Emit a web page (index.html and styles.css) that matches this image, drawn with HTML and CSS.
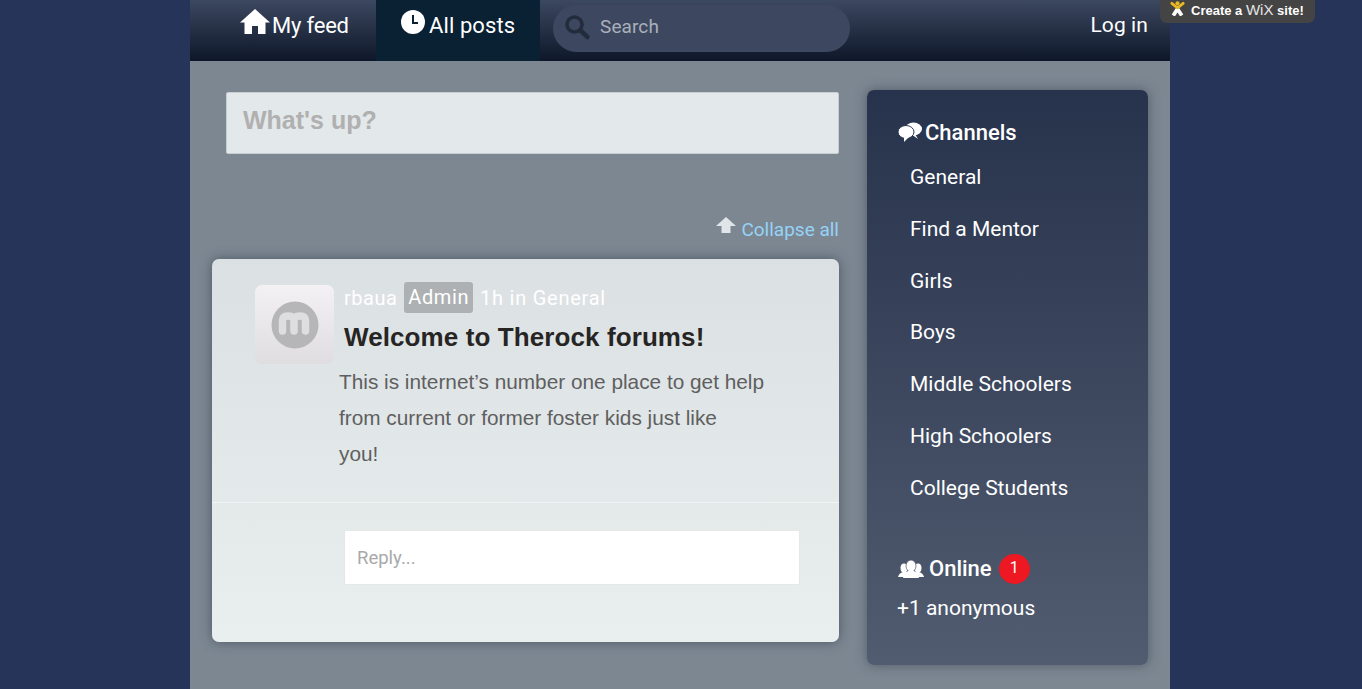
FILE: index.html
```html
<html>
  <head>
    <title>Therock forums</title>
    <link rel="stylesheet" href="styles.css">
  </head>
  <body>
    <div class="wix-badge">
      <svg class="wix-logo" viewBox="0 0 16 16" width="15" height="15"><path fill="none" stroke="#fff" stroke-width="4" d="M3.5 15.5 L8 8.5 L12.5 15.5"/><path fill="none" stroke="#e8b923" stroke-width="3" stroke-linecap="round" stroke-linejoin="round" d="M2 2.5 L8 7.5 L14 2.5"/><circle cx="8" cy="2.5" r="2.2" fill="#e8b923"/></svg>
      <span>Create a <span class="wix-name">WiX</span> site!</span>
    </div>
    <div class="page">
      <nav class="topbar">
        <a class="tab tab-feed">
          <svg class="tab-icon" viewBox="0 0 30 26" width="30" height="26"><path fill="#fff" d="M15 0 L30 13.5 L25.5 13.5 L25.5 25 L18 25 L18 17 L12 17 L12 25 L4.5 25 L4.5 13.5 L0 13.5 Z"/></svg>
          <span class="feed-label">My feed</span>
        </a>
        <a class="tab tab-active">
          <svg class="tab-icon" viewBox="0 0 24 24" width="24" height="24"><circle cx="12" cy="12" r="12" fill="#fff"/><path fill="none" stroke="#0a2033" stroke-width="2" d="M12 5 V13 H17"/></svg>
          All posts
        </a>
        <div class="search">
          <svg class="search-icon" viewBox="0 0 26 26" width="26" height="26"><circle cx="9.5" cy="9.5" r="7.5" fill="none" stroke="#232b3c" stroke-width="3.5"/><path stroke="#232b3c" stroke-width="4.5" stroke-linecap="round" d="M15.5 15.5 L22.5 22"/></svg>
          <span>Search</span>
        </div>
        <a class="login">Log in</a>
      </nav>
      <div class="content">
        <main class="feed">
          <div class="whats-up">What's up?</div>
          <div class="collapse">
            <svg viewBox="0 0 20 18" width="20" height="18"><path fill="#dfe5e8" d="M10 0 L20 9 L14.5 9 L14.5 16 L5.5 16 L5.5 9 L0 9 Z"/></svg>
            <a>Collapse all</a>
          </div>
          <article class="post">
            <div class="post-body">
              <div class="avatar">
                <svg viewBox="0 0 48 48" width="48" height="48"><circle cx="24" cy="24" r="23.5" fill="#b6b6b8"/><path fill="none" stroke="#dedde0" stroke-width="7.5" stroke-linecap="round" stroke-linejoin="round" d="M11.5 30 V20 Q11.5 15 17 15 Q23 15 23 20 V30 M23 20 Q23 15 29 15 Q34.5 15 34.5 20 V30"/></svg>
              </div>
              <div class="post-text">
                <div class="post-meta"><span class="author">rbaua</span><span class="role">Admin</span><span>1h in General</span></div>
                <h1>Welcome to Therock forums!</h1>
                <p>This is internet’s number one place to get help<br>from current or former foster kids just like<br>you!</p>
              </div>
            </div>
            <div class="post-reply">
              <div class="reply-box">Reply...</div>
            </div>
          </article>
        </main>
        <aside class="sidebar">
          <h2 class="side-head">
            <svg viewBox="0 0 24 20" width="24" height="20"><ellipse cx="15.5" cy="7" rx="8.5" ry="6.5" fill="#fff"/><path fill="#fff" d="M17 12 L20 17 L13 12 Z"/><ellipse cx="8" cy="10" rx="8" ry="6.5" fill="#fff" stroke="#2b3750" stroke-width="1"/><path fill="#fff" d="M6 15 L6 20 L11 15 Z"/></svg>
            Channels
          </h2>
          <ul class="channels">
            <li>General</li>
            <li>Find a Mentor</li>
            <li>Girls</li>
            <li>Boys</li>
            <li>Middle Schoolers</li>
            <li>High Schoolers</li>
            <li>College Students</li>
          </ul>
          <h2 class="side-head online">
            <svg viewBox="0 0 26 18" width="26" height="18"><g fill="#fff"><ellipse cx="6" cy="8" rx="3.5" ry="4.5"/><ellipse cx="20" cy="8" rx="3.5" ry="4.5"/><path d="M0 17 Q1 13 5 12 H21 Q25 13 26 17 Z"/></g><ellipse cx="13" cy="6" rx="5" ry="6" fill="#fff" stroke="#4a566c" stroke-width="0.7"/><path fill="#fff" d="M5 18 Q6 13 10 11 H16 Q20 13 21 18 Z"/></svg>
            Online <span class="badge">1</span>
          </h2>
          <div class="anon">+1 anonymous</div>
        </aside>
      </div>
    </div>
  </body>
</html>
```

FILE: styles.css
```css
html, body {
  margin: 0;
  height: 100%;
  overflow: hidden;
}
body {
  background-color: #26345a;
  color: #fff;
  font-family: Roboto, "Liberation Sans", sans-serif;
}

.wix-badge {
  position: absolute;
  top: 0;
  left: 1160px;
  width: 155px;
  height: 23px;
  box-sizing: border-box;
  padding-left: 10px;
  display: flex;
  align-items: flex-start;
  gap: 6px;
  background-color: #444;
  border-radius: 0 0 7px 7px;
  font-family: "Liberation Sans", sans-serif;
  font-size: 13px;
  font-weight: bold;
  line-height: 20px;
}
.wix-logo {
  margin-top: 1px;
}
.wix-name {
  font-weight: normal;
  font-size: 15px;
  color: #e4e4e4;
}

.page {
  width: 980px;
  height: 100%;
  margin-left: 190px;
  background-color: #7c8792;
}

.topbar {
  display: flex;
  height: 61px;
  background: linear-gradient(#3c4860, #0e1729);
  font-size: 22px;
  letter-spacing: 0.1px;
}
.tab {
  display: flex;
  align-items: center;
  gap: 2px;
  height: 50px;
}
.tab-icon {
  margin-top: -6px;
}
.feed-label {
  letter-spacing: -0.2px;
}
.tab-feed {
  width: 186px;
  padding-left: 50px;
  box-sizing: border-box;
}
.tab-active {
  width: 164px;
  height: 61px;
  box-sizing: border-box;
  padding: 0 0 11px 25px;
  background-color: #0a2033;
  gap: 4px;
}
.search {
  display: flex;
  align-items: center;
  gap: 9px;
  width: 297px;
  height: 47px;
  box-sizing: border-box;
  margin: 5px 0 0 13px;
  padding: 0 0 5px 12px;
  border-radius: 24px;
  background-color: #3d4860;
  color: #aab0ba;
  font-size: 19px;
}
.search-icon {
  margin-top: 4px;
}
.login {
  margin: 13px 22px 0 auto;
  font-size: 21px;
}

.content {
  display: flex;
  padding: 29px 22px 0 22px;
  gap: 28px;
}
.feed {
  width: 627px;
}
.whats-up {
  height: 62px;
  box-sizing: border-box;
  margin: 2px 0 0 14px;
  padding-left: 16px;
  background-color: #e3e8ea;
  border: 1px solid #c9ced2;
  border-radius: 2px;
  color: #b0b0b0;
  font-family: "Liberation Sans", sans-serif;
  font-size: 25px;
  font-weight: bold;
  line-height: 55px;
}
.collapse {
  display: flex;
  justify-content: flex-end;
  align-items: center;
  gap: 5px;
  margin-top: 62px;
  height: 26px;
  color: #95d3f7;
  font-size: 19px;
}
.collapse svg {
  margin-top: -6px;
}

.post {
  margin-top: 17px;
  height: 383px;
  background: linear-gradient(#dbe0e3, #e9eeee);
  border-radius: 7px;
  box-shadow: 0 0 12px rgba(40, 50, 65, 0.55);
}
.post-body {
  display: flex;
  height: 244px;
  box-sizing: border-box;
  padding: 23px 0 0 43px;
  border-bottom: 1px solid #f1f4f4;
}
.avatar {
  display: flex;
  align-items: center;
  justify-content: center;
  width: 79px;
  height: 79px;
  margin-top: 3px;
  border-radius: 7px;
  background: linear-gradient(#f3f1f4, #dfdde0);
}
.post-text {
  margin-left: 10px;
  flex: 1;
}
.post-meta {
  display: flex;
  align-items: center;
  gap: 7px;
  font-size: 20px;
  letter-spacing: 0.75px;
}
.author {
  letter-spacing: 0.5px;
}
.role {
  padding: 3px 4px 4px;
  background-color: #adb1b3;
  border-radius: 3px;
  letter-spacing: 0.6px;
}
.post-text h1 {
  margin: 6px 0 0 0;
  color: #272524;
  font-family: "Liberation Sans", sans-serif;
  font-size: 26px;
  font-weight: bold;
  letter-spacing: 0.1px;
  line-height: 36px;
}
.post-text p {
  margin: 9px 0 0 -5px;
  color: #5f5f5f;
  font-family: "Liberation Sans", sans-serif;
  font-size: 20.8px;
  line-height: 36px;
}
.post-reply {
  padding: 27px 39px 0 132px;
}
.reply-box {
  height: 55px;
  box-sizing: border-box;
  padding-left: 12px;
  background-color: #fff;
  border: 1px solid #e6e8e8;
  border-radius: 2px;
  color: #a9a9a9;
  font-size: 18.5px;
  line-height: 55px;
}

.sidebar {
  width: 281px;
  height: 575px;
  box-sizing: border-box;
  padding: 29px 0 0 31px;
  background: linear-gradient(#27324c, #515c70);
  border-radius: 7px;
  box-shadow: 0 0 12px rgba(40, 50, 65, 0.5);
  font-size: 21px;
}
.side-head {
  display: flex;
  align-items: center;
  gap: 3px;
  margin: 0;
  height: 26px;
  font-size: 22px;
  font-weight: 500;
}
.channels {
  list-style: none;
  margin: 15px 0 0 0;
  padding: 0 0 0 12px;
}
.channels li {
  height: 51.8px;
  line-height: 34px;
}
.online {
  margin-top: 33px;
  gap: 5px;
}
.badge {
  display: inline-block;
  width: 31px;
  height: 30px;
  margin-left: 2px;
  border-radius: 50%;
  background-color: #ee1822;
  font-size: 16px;
  font-weight: 400;
  line-height: 28px;
  text-align: center;
}
.anon {
  margin: 14px 0 0 -1px;
  font-size: 21px;
}
```
